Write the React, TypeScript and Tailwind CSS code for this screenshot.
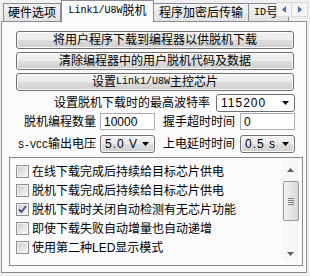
import React from "react";

const btnBg =
  "bg-[linear-gradient(#f2f2f2_0%,#ebebeb_50%,#dddddd_50%,#cfcfcf_100%)]";

function Arrow({ up = false, className = "" }: { up?: boolean; className?: string }) {
  return (
    <svg width="7" height="4" viewBox="0 0 7 4" className={className}>
      {up ? <path d="M0 4 L3.5 0 L7 4 Z" fill="currentColor" /> : <path d="M0 0 L7 0 L3.5 4 Z" fill="currentColor" />}
    </svg>
  );
}

function Btn({ children }: { children: React.ReactNode }) {
  return (
    <div
      className={`flex h-[18px] w-[278px] items-center justify-center rounded-[3px] border border-[#707070] ${btnBg} text-[12px] leading-none text-black shadow-[inset_0_0_0_1px_#fcfcfc]`}
    >
      {children}
    </div>
  );
}

function Combo({ value, white = false, w = "w-[55px]" }: { value: string; white?: boolean; w?: string }) {
  return (
    <div
      className={`flex h-[18px] ${w} items-center justify-between rounded-[3px] border border-[#707070] pl-[4px] pr-[5px] text-[12px] leading-none ${
        white ? "bg-[#fdfdfd]" : btnBg
      } shadow-[inset_0_0_0_1px_#fcfcfc]`}
    >
      <span className="tracking-[1px]">{value}</span>
      <Arrow className="text-black" />
    </div>
  );
}

function Input({ value }: { value: string }) {
  return (
    <div className="flex h-[17px] w-[55px] items-center border border-[#abadb3] border-t-[#abadb3] bg-white pl-[3px] text-[12px] leading-none">
      {value}
    </div>
  );
}

function Check({ checked = false, label }: { checked?: boolean; label: string }) {
  return (
    <div className="flex h-[19px] items-center gap-[3px]">
      <div className="flex h-[13px] w-[13px] items-center justify-center border border-[#8e8f8f] bg-[#f4f4f4]">
        <div className="relative h-[9px] w-[9px] bg-[linear-gradient(135deg,#cbcfd5,#f6f6f6)]">
          {checked && (
            <svg width="9" height="9" viewBox="0 0 9 9" className="absolute left-0 top-0">
              <path d="M1 4.5 L3.5 7 L8 1" stroke="#3c4e7c" strokeWidth="1.8" fill="none" />
            </svg>
          )}
        </div>
      </div>
      <span className="text-[12px] leading-none">{label}</span>
    </div>
  );
}

export default function App() {
  return (
    <div className="h-[276px] w-[310px] overflow-hidden bg-[#f0f0f0] font-['Liberation_Sans','Noto_Sans_CJK_SC',sans-serif] text-black">
      {/* tabs */}
      <div className="relative flex h-[21px] items-end pl-[3px]">
        <div className="flex h-[18px] w-[58px] items-center justify-center border border-b-0 border-[#898c95] bg-[linear-gradient(#f2f2f2,#e3e3e3)] text-[12px] leading-none">
          硬件选项
        </div>
        <div className="relative z-10 -mb-px flex h-[22px] w-[93px] items-center justify-center border border-b-0 border-[#898c95] bg-[#fbfbfb] pb-[2px] text-[12px] leading-none">
          <span className="font-['Liberation_Mono'] text-[10px]">Link1/U8W</span>
          <span>脱机</span>
        </div>
        <div className="flex h-[18px] w-[95px] items-center justify-center border border-b-0 border-l-0 border-[#898c95] bg-[linear-gradient(#f2f2f2,#e3e3e3)] text-[12px] leading-none">
          程序加密后传输
        </div>
        <div className="flex h-[18px] w-[40px] items-center border border-b-0 border-l-0 border-[#898c95] bg-[linear-gradient(#f2f2f2,#e3e3e3)] pl-[5px] text-[12px] leading-none">
          <span className="font-['Liberation_Mono'] text-[10px]">ID</span>号
        </div>
        <div className="absolute right-[2px] top-[2px] flex">
          <div className="flex h-[15px] w-[16px] items-center justify-center border border-[#d9d9d9] bg-[#f4f4f4] text-[#4b6ea8]">
            <svg width="4" height="7" viewBox="0 0 4 7">
              <path d="M4 0 L0 3.5 L4 7 Z" fill="currentColor" />
            </svg>
          </div>
          <div className="flex h-[15px] w-[16px] items-center justify-center border border-l-0 border-[#d9d9d9] bg-[#f4f4f4] text-[#4b6ea8]">
            <svg width="4" height="7" viewBox="0 0 4 7">
              <path d="M0 0 L4 3.5 L0 7 Z" fill="currentColor" />
            </svg>
          </div>
        </div>
      </div>

      {/* panel */}
      <div className="ml-[1px] flex h-[252px] w-[306px] flex-col border border-[#898c95] bg-[#fbfbfb]">
        <div className="ml-[14px] mt-[9px] flex flex-col gap-[3px]">
          <Btn>将用户程序下载到编程器以供脱机下载</Btn>
          <Btn>清除编程器中的用户脱机代码及数据</Btn>
          <Btn>
            设置<span className="font-['Liberation_Mono'] text-[10px]">Link1/U8W</span>主控芯片
          </Btn>
        </div>

        <div className="ml-[14px] mt-[3px] flex h-[17px] w-[279px] items-center justify-end gap-[6px]">
          <span className="text-[12px] leading-none">设置脱机下载时的最高波特率</span>
          <Combo value="115200" white w="w-[79px]" />
        </div>

        <div className="ml-[14px] mt-[2px] flex h-[17px] items-center">
          <div className="w-[84px] pr-[4px] text-right text-[12px] leading-none">脱机编程数量</div>
          <Input value="10000" />
          <div className="w-[85px] pr-[5px] text-right text-[12px] leading-none">握手超时时间</div>
          <Input value="0" />
        </div>

        <div className="ml-[14px] mt-[5px] flex h-[18px] items-center">
          <div className="w-[84px] pr-[4px] text-right text-[12px] leading-none">
            <span className="font-['Liberation_Mono'] text-[10px]">S-VCC</span>输出电压
          </div>
          <Combo value="5.0 V" />
          <div className="w-[85px] pr-[5px] text-right text-[12px] leading-none">上电延时时间</div>
          <Combo value="0.5 s" />
        </div>

        <div className="relative ml-[7px] mt-[4px] h-[109px] w-[294px] border border-[#828790] bg-[#fbfbfb] pl-[6px] pt-[4px]">
          <Check label="在线下载完成后持续给目标芯片供电" />
          <Check label="脱机下载完成后持续给目标芯片供电" />
          <Check checked label="脱机下载时关闭自动检测有无芯片功能" />
          <Check label="即使下载失败自动增量也自动递增" />
          <Check label="使用第二种LED显示模式" />

          {/* scrollbar */}
          <div className="absolute bottom-[3px] right-[3px] top-[3px] flex w-[17px] flex-col items-center bg-[#f7f7f7]">
            <div className="flex h-[17px] w-full items-center justify-center text-[#606060]">
              <Arrow up />
            </div>
            <div className="mt-[3px] flex h-[40px] w-[16px] items-center justify-center rounded-[2px] border border-[#979797] bg-[linear-gradient(90deg,#f3f3f3,#e5e5e5_50%,#d9d9d9)]">
              <div className="flex flex-col gap-[1px]">
                <div className="h-px w-[6px] bg-[#808080]" />
                <div className="h-px w-[6px] bg-[#808080]" />
                <div className="h-px w-[6px] bg-[#808080]" />
                <div className="h-px w-[6px] bg-[#808080]" />
              </div>
            </div>
            <div className="flex-1" />
            <div className="flex h-[17px] w-full items-center justify-center text-[#606060]">
              <Arrow />
            </div>
          </div>
        </div>
      </div>
    </div>
  );
}
